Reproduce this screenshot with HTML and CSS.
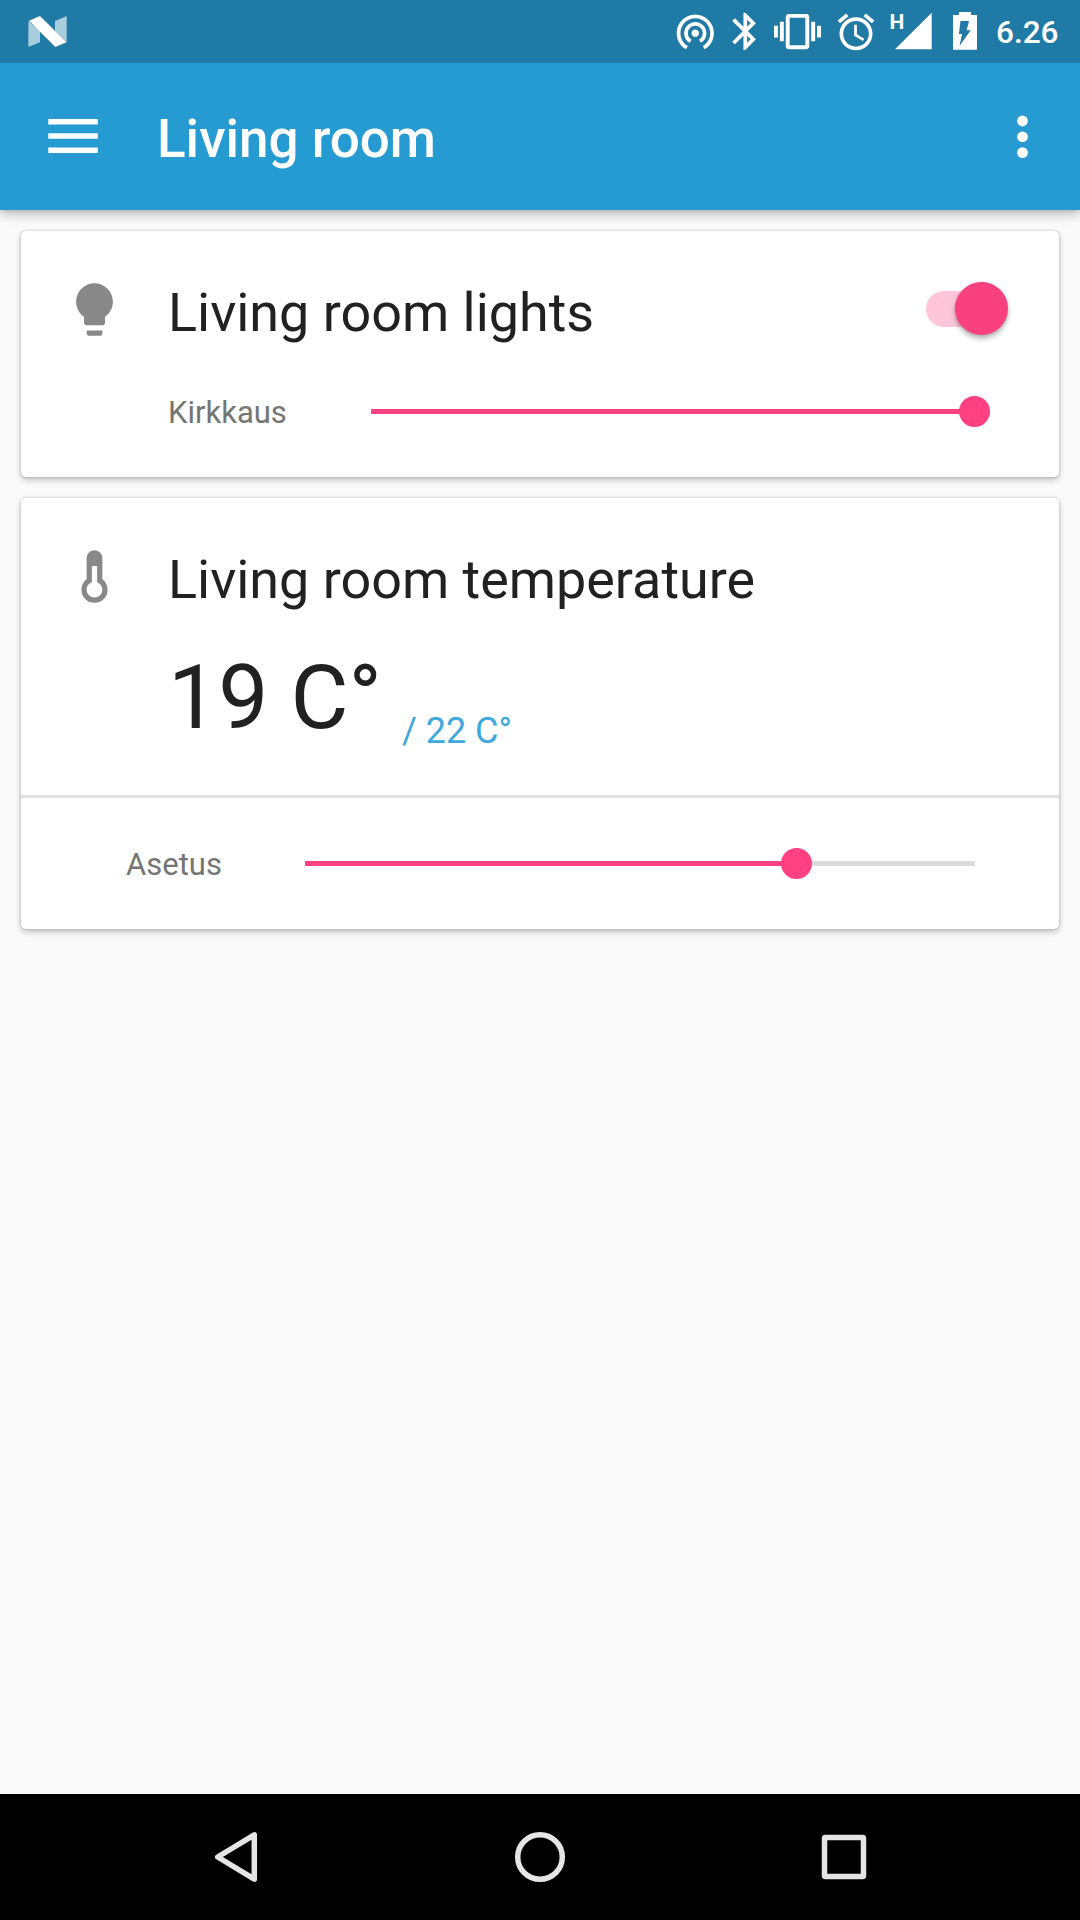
FILE: index.html
```html
<!DOCTYPE html>
<html lang="fi">
<head>
<meta charset="utf-8">
<title>Living room</title>
<link rel="stylesheet" href="styles.css">
</head>
<body>
<div class="screen">
  <div class="status-bar">
    <svg class="status-logo" width="40" height="63" viewBox="28 0 40 63">
      <path fill="#a8cddc" d="M28.4 21 40 31.500V42.300L28.400 47zM55 21 66.700 16V42L55 31z"/>
      <path fill="#fff" d="M29 20.700 40 16 66.500 42.200 55.300 47z"/>
    </svg>
    <svg class="icon-hotspot" width="44.600" height="44.600" viewBox="0 0 24 24"><path d="M12 11c-1.100 0-2 .9-2 2s.9 2 2 2 2-.9 2-2-.9-2-2-2zm6 2c0-3.310-2.690-6-6-6s-6 2.690-6 6c0 2.220 1.210 4.150 3 5.190l1-1.740c-1.190-.7-2-1.970-2-3.450 0-2.210 1.790-4 4-4s4 1.790 4 4c0 1.480-.81 2.750-2 3.450l1 1.740c1.790-1.040 3-2.970 3-5.190zM12 3C6.480 3 2 7.480 2 13c0 3.700 2.010 6.920 4.990 8.650l1-1.730C5.610 18.530 4 15.960 4 13c0-4.420 3.580-8 8-8s8 3.580 8 8c0 2.960-1.610 5.530-4 6.920l1 1.730c2.990-1.730 5-4.950 5-8.650 0-5.520-4.480-10-10-10z"/></svg>
    <svg class="icon-bluetooth" width="44.600" height="44.600" viewBox="0 0 24 24"><path d="M17.710 7.710L12 2h-1v7.590L6.410 5 5 6.410 10.590 12 5 17.590 6.410 19 11 14.410V22h1l5.710-5.710-4.300-4.290 4.300-4.290zM13 5.830l1.880 1.880L13 9.590V5.830zm1.880 10.460L13 18.170v-3.760l1.880 1.880z"/></svg>
    <svg class="icon-vibrate" width="47" height="47" viewBox="0 0 24 24"><path d="M0 15h2V9H0v6zm3 2h2V7H3v10zm19-8v6h2V9h-2zm-3 8h2V7h-2v10zM16.500 3h-9C6.670 3 6 3.670 6 4.500v15c0 .83.67 1.500 1.500 1.500h9c.83 0 1.500-.67 1.500-1.500v-15c0-.83-.67-1.500-1.500-1.500zM16 19H8V5h8v14z"/></svg>
    <svg class="icon-alarm" width="44" height="44" viewBox="0 0 24 24"><path d="M22 5.720l-4.600-3.860-1.290 1.530 4.600 3.860L22 5.720zM7.880 3.390L6.600 1.860 2 5.710l1.290 1.530 4.590-3.850zM12.500 8H11v6l4.750 2.850.75-1.230-4-2.370V8zM12 4c-4.970 0-9 4.030-9 9s4.020 9 9 9c4.970 0 9-4.030 9-9s-4.030-9-9-9zm0 16c-3.870 0-7-3.130-7-7s3.130-7 7-7 7 3.130 7 7-3.130 7-7 7z"/></svg>
    <svg class="icon-signal" width="43" height="63" viewBox="889 0 43 63">
      <path d="M895 49.300 931.700 12.700V49.300z"/>
      <text class="signal-type" x="889.500" y="29">H</text>
    </svg>
    <svg class="icon-battery" width="24" height="63" viewBox="953 0 24 63">
      <path fill-rule="evenodd" d="M953 15h6v-3h12v3h6v34.700h-24zM960.500 21h8.500l-2.300 9.300h4L959.500 46l2.600-12h-3.200z"/>
    </svg>
    <span class="clock">6.26</span>
  </div>

  <div class="app-bar">
    <svg class="menu" width="50" height="36" viewBox="0 0 50 36"><path d="M.3 0h49.500v5.500H.3zM.3 14.200h49.500v5.500H.3zM.3 28.400h49.500v5.500H.3z"/></svg>
    <h1 class="app-title">Living room</h1>
    <svg class="more" width="12" height="44" viewBox="0 0 12 44"><circle cx="5.500" cy="6" r="5.400"/><circle cx="5.500" cy="21.800" r="5.400"/><circle cx="5.500" cy="37.600" r="5.400"/></svg>
  </div>

  <div class="content">
    <section class="card">
      <div class="card-head">
        <svg class="card-icon" width="63" height="63" viewBox="0 0 24 24"><path d="M9 21c0 .55.45 1 1 1h4c.55 0 1-.45 1-1v-1H9v1zm3-19C8.140 2 5 5.140 5 9c0 2.380 1.190 4.470 3 5.740V17c0 .55.45 1 1 1h6c.55 0 1-.45 1-1v-2.260c1.810-1.270 3-3.360 3-5.740 0-3.860-3.140-7-7-7z"/></svg>
        <h2 class="card-title">Living room lights</h2>
        <div class="switch"><span class="switch-thumb"></span></div>
      </div>
      <div class="setting brightness">
        <span class="label">Kirkkaus</span>
        <div class="slider"><div class="slider-fill" style="width:100%"></div></div>
      </div>
    </section>

    <section class="card climate">
      <div class="card-head">
        <svg class="card-icon" width="63" height="63" viewBox="0 0 24 24"><path d="M17 17a5 5 0 0 1-10 0c0-1.640.79-3.090 2-4V5a3 3 0 0 1 6 0v8c1.210.91 2 2.360 2 4M11 8v6.170c-1.170.41-2 1.520-2 2.830a3 3 0 0 0 6 0c0-1.310-.84-2.420-2-2.830V8h-2z"/></svg>
        <h2 class="card-title">Living room temperature</h2>
      </div>
      <div class="reading">
        <span class="current">19 C°</span>
        <span class="target">/ 22 C°</span>
      </div>
      <div class="setting setpoint">
        <span class="label">Asetus</span>
        <div class="slider"><div class="slider-fill" style="width:73.4%"></div></div>
      </div>
    </section>
  </div>

  <div class="nav-bar">
    <svg width="50" height="54" viewBox="0 0 50 54"><path d="M44.300 4.800V49.200L7.700 27z"/></svg>
    <svg width="54" height="54" viewBox="0 0 54 54"><circle cx="27" cy="27" r="22.300"/></svg>
    <svg width="50" height="54" viewBox="0 0 50 54"><rect x="5.500" y="7.500" width="39" height="39" rx="1"/></svg>
  </div>
</div>
</body>
</html>
```
FILE: styles.css
```css
* { box-sizing: border-box; }

body {
  margin: 0;
  font-family: Roboto, sans-serif;
  background: #fafafa;
}

svg { display: block; flex: none; }

.screen {
  width: 1080px;
  height: 1920px;
  display: flex;
  flex-direction: column;
  overflow: hidden;
}

/* System status bar */
.status-bar {
  position: relative;
  z-index: 1;
  height: 63px;
  display: flex;
  align-items: center;
  padding: 0 21px 0 28px;
  background: #1f7ba5;
  color: #fff;
  fill: #fff;
}
.status-logo { margin-right: auto; }
.icon-bluetooth { margin-left: 5.500px; }
.icon-vibrate { margin-left: 6px; }
.icon-alarm { margin-left: 13px; }
.icon-signal { margin-left: 11.500px; }
.icon-battery { margin-left: 21px; }
.signal-type { font-size: 21px; font-weight: 700; }
.clock {
  width: 63px;
  margin-left: 19px;
  padding-top: 2px;
  font-size: 31.500px;
  font-weight: 500;
  line-height: 62px;
  white-space: nowrap;
}

/* App bar */
.app-bar {
  position: relative;
  height: 147px;
  display: flex;
  align-items: center;
  padding: 0 51.500px 0 48px;
  background: #269bd1;
  fill: #fff;
  box-shadow: 0 5px 10px rgba(0, 0, 0, .22), 0 0 5px rgba(0, 0, 0, .15);
}
.app-title {
  margin: 0 auto 0 59px;
  padding-top: 5px;
  color: #fff;
  font-size: 53px;
  font-weight: 500;
  line-height: 62px;
}

/* Cards */
.content {
  flex: 1;
  display: flex;
  flex-direction: column;
  gap: 21px;
  padding: 21px;
}
.card {
  height: 246px;
  padding-top: 47px;
  border-radius: 5px;
  background: #fff;
  box-shadow: 0 3px 6px rgba(0, 0, 0, .23), 0 0 3px rgba(0, 0, 0, .2);
}
.climate { height: 431px; }
.card-head {
  height: 70px;
  display: flex;
  align-items: flex-start;
  padding: 0 51px 0 42px;
}
.card-icon { fill: #888; }
.card-title {
  margin: 0 auto 0 42px;
  color: #212121;
  font-size: 53.900px;
  font-weight: 400;
  line-height: 70px;
  white-space: nowrap;
}

.switch {
  position: relative;
  width: 82px;
  height: 53px;
  margin-top: 4px;
  display: flex;
  justify-content: flex-end;
}
.switch::before {
  content: "";
  position: absolute;
  left: 0;
  top: 9px;
  width: 72px;
  height: 36px;
  border-radius: 18px;
  background: #ffc5d8;
}
.switch-thumb {
  position: relative;
  width: 53px;
  height: 53px;
  border-radius: 50%;
  background: #fa417f;
  box-shadow: 0 4px 5px rgba(0, 0, 0, .26), 0 0 3px rgba(0, 0, 0, .15);
}

.setting {
  display: flex;
  align-items: center;
  padding-right: 84px;
}
.label {
  padding-top: 3px;
  color: #757575;
  font-size: 31px;
  line-height: 36px;
}
.brightness { height: 35px; margin-top: 46px; padding-left: 147px; }
.brightness .label { width: 203px; }
.setpoint {
  height: 134px;
  padding-left: 105px;
  border-top: 3px solid #e0e1e1;
}
.setpoint .label { width: 179px; }

.slider {
  flex: 1;
  height: 5px;
  background: #dbdbdb;
}
.slider-fill {
  position: relative;
  height: 5px;
  background: #ff4081;
}
.slider-fill::after {
  content: "";
  position: absolute;
  right: -15px;
  top: -13px;
  width: 31px;
  height: 31px;
  border-radius: 50%;
  background: #ff4081;
}

.reading {
  height: 180px;
  display: flex;
  align-items: flex-end;
  padding: 0 0 44px 147px;
}
.current {
  color: #212121;
  font-size: 89.250px;
  line-height: 106px;
}
.target {
  margin: 0 0 -1px 20px;
  color: #40a8da;
  font-size: 36px;
  line-height: 42px;
}

/* System navigation */
.nav-bar {
  height: 126px;
  display: flex;
  align-items: center;
  justify-content: space-between;
  padding: 0 211px 0 210px;
  background: #000;
  fill: none;
  stroke: #e5e5e5;
  stroke-width: 5.500px;
  stroke-linejoin: round;
}
```
